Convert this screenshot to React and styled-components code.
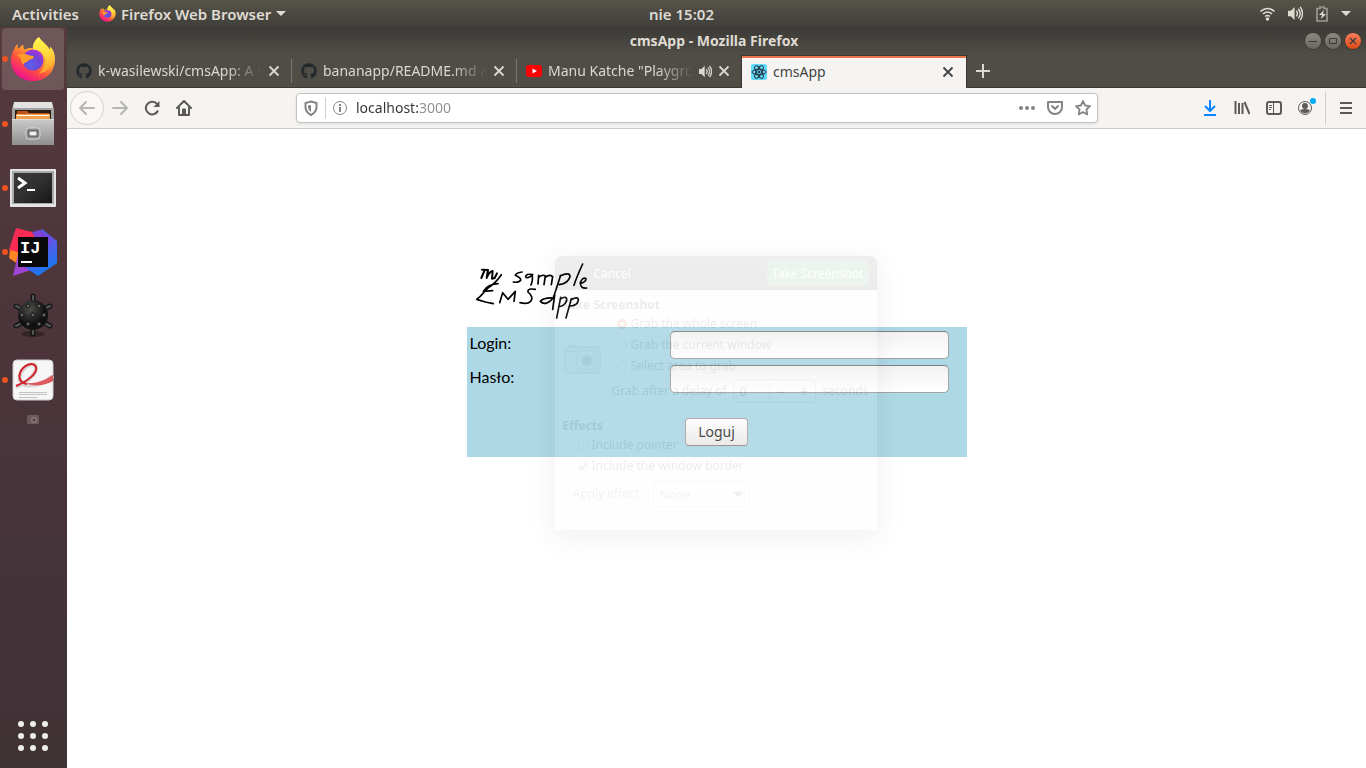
import React from "react";
import styled, { createGlobalStyle, css } from "styled-components";
import { FaGithub } from "react-icons/fa";

const GlobalStyle = createGlobalStyle`
  * { box-sizing: border-box; }
  body { margin: 0; background: #fff; font-family: "Noto Sans", "Open Sans", sans-serif; }
  button, input, select { font-family: inherit; margin: 0; }
  button { padding: 0; border: 0; background: none; }
  svg { display: block; flex: none; }
`;

const Desktop = styled.div`
  min-height: 100vh;
  display: flex;
  flex-direction: column;
`;

/* ---- system bar ---- */
const SystemBar = styled.header`
  height: 27px;
  display: grid;
  grid-template-columns: 1fr auto 1fr;
  align-items: center;
  padding: 0 15px 0 12px;
  background: linear-gradient(#57534a, #403f3a);
  color: #dfdbd2;
  font-size: 15px;
  line-height: 20px;
  font-weight: 600;
`;
const BarGroup = styled.div`
  display: flex;
  align-items: center;
  justify-content: ${(p) => (p.$end ? "flex-end" : "flex-start")};
  gap: ${(p) => (p.$end ? 13 : 20)}px;
`;
const BarButton = styled.button`
  display: flex;
  align-items: center;
  gap: 5px;
  color: inherit;
  font-size: 15px;
  font-weight: 600;
  line-height: 20px;
  white-space: nowrap;
`;

const Body = styled.div`
  flex: 1;
  display: flex;
`;

/* ---- dock ---- */
const Dock = styled.nav`
  width: 67px;
  flex: none;
  display: flex;
  flex-direction: column;
  align-items: stretch;
  background: linear-gradient(#553a3e, #4b343a 45%, #44343a 75%, #3f3234);
`;
const DockItem = styled.button`
  height: 64px;
  display: grid;
  grid-template-columns: 9px 44px;
  align-items: center;
  border-radius: 4px;
  margin: 0 3px 0 2px;
  svg { justify-self: center; }
  ${(p) => p.$active && css`background: #6e5659; height: 62px; margin: 1px 3px 2px 2px;`}
`;
const RunDot = styled.span`
  width: 6px;
  height: 6px;
  border-radius: 50%;
  background: ${(p) => (p.$on ? "#e95420" : "transparent")};
`;
const DockMini = styled.button`
  display: flex;
  justify-content: center;
  padding: 3px 2px 0 0;
`;
const AppsButton = styled.button`
  margin-top: auto;
  display: flex;
  justify-content: center;
  padding: 0 2px 16px 0;
`;

/* ---- browser ---- */
const Browser = styled.main`
  flex: 1;
  min-width: 0;
  display: flex;
  flex-direction: column;
`;
const TitleBar = styled.div`
  height: 28px;
  display: grid;
  grid-template-columns: 1fr auto 1fr;
  align-items: center;
  padding-right: 5px;
  background: linear-gradient(#3b3a36, #504d46);
  color: #dfdbd2;
  font-size: 14px;
  line-height: 20px;
  font-weight: 700;
`;
const WindowButtons = styled.div`
  display: flex;
  justify-content: flex-end;
  gap: 4px;
`;
const WindowButton = styled.button`
  width: 16px;
  height: 16px;
  border-radius: 50%;
  display: grid;
  place-items: center;
  color: #3c3b37;
  background: ${(p) => (p.$close ? "linear-gradient(#f37f5d, #dd4814)" : "linear-gradient(#8b8982, #686660)")};
  box-shadow: 0 0 0 1px #3c3b37;
`;
const TabStrip = styled.div`
  height: 33px;
  display: flex;
  background: #504d46;
  border-bottom: 1px solid #3a3935;
`;
const Tab = styled.div`
  width: 225px;
  min-width: 0;
  display: flex;
  align-items: center;
  gap: 6px;
  padding: 0 12px 0 9px;
  color: #dcd8d0;
  background: linear-gradient(#7b776e, #7b776e) right 0 center / 1px 24px no-repeat;
  ${(p) => p.$last && css`background: none;`}
  ${(p) => p.$active && css`
    background: #f5f4f2;
    color: #444;
    height: 33px;
    border: solid #3a3935;
    border-width: 1px 1px 0;
    box-shadow: inset 0 2px #ed764d;
    width: 226px;
    margin-left: -1px;
  `}
`;
const TabTitle = styled.button`
  flex: 1;
  min-width: 0;
  overflow: hidden;
  text-align: left;
  white-space: nowrap;
  color: inherit;
  font-size: 14px;
  line-height: 20px;
  ${(p) => p.$fade && css`mask-image: linear-gradient(to right, #000 calc(100% - 36px), transparent);`}
`;
const IconButton = styled.button`
  display: grid;
  place-items: center;
  color: inherit;
`;
const NewTab = styled(IconButton)`
  width: 32px;
  color: #dcd8d0;
`;
const Toolbar = styled.div`
  height: 41px;
  display: flex;
  align-items: center;
  background: #f5f4f2;
  border-bottom: 1px solid #cbc8c5;
  color: #5c5b58;
  padding-left: 3px;
`;
const NavButton = styled(IconButton)`
  width: ${(p) => (p.$wide ? 40 : 32)}px;
  height: 32px;
  ${(p) => p.$dim && css`color: #b8b6b3;`}
  ${(p) => p.$round && css`
    width: 34px;
    height: 34px;
    border-radius: 50%;
    border: 1px solid #d4d2cf;
    background: #f9f8f7;
  `}
`;
const UrlBox = styled.div`
  flex: 1;
  height: 30px;
  margin: 0 96px;
  padding: 0 6px;
  display: flex;
  align-items: center;
  gap: 12px;
  background: #fff;
  border: 1px solid #c6c3c0;
  border-radius: 4px;
  box-shadow: 0 1px 3px #0000001a;
  color: #858482;
`;
const Rule = styled.span`
  width: 1px;
  height: ${(p) => p.$h}px;
  background: #cfccc9;
`;
const SiteInfo = styled.div`
  display: flex;
  align-items: center;
  gap: 6px;
`;
const UrlInput = styled.input`
  flex: 1;
  min-width: 0;
  padding: 0;
  margin-left: -4px;
  border: 0;
  outline: 0;
  font-size: 14px;
  line-height: 20px;
  color: #333;
  background: linear-gradient(to right, #333 62px, #8f8f8f 62px);
  background-clip: text;
  -webkit-text-fill-color: transparent;
`;
const MenuArea = styled.div`
  display: flex;
  align-items: center;
  ${Rule} { margin-left: 3px; }
`;

/* ---- page ---- */
const Page = styled.section`
  flex: 1;
  position: relative;
  padding: 131px 16px 16px;
  background: #fff;
`;
const Content = styled.div`
  max-width: 500px;
  margin: 0 auto;
  font-family: Lato, sans-serif;
`;
const Logo = styled.svg`
  margin: 0 0 5px 6px;
`;
const LoginForm = styled.form`
  height: 130px;
  padding: 4px 18px 0 3px;
  background: #add8e6;
  color: #000;
`;
const Field = styled.div`
  display: grid;
  grid-template-columns: 200px 1fr;
  align-items: center;
  margin-bottom: 6px;
  font-size: 16px;
`;
const FieldLabel = styled.label`
  line-height: 20px;
  padding-bottom: 4px;
`;
const TextInput = styled.input`
  width: 100%;
  height: 28px;
  padding: 0 6px;
  border: 1px solid #a5a19e;
  border-top-color: #85817e;
  border-radius: 5px;
  outline: 0;
  background: linear-gradient(#f2f2f2, #fff);
`;
const FormActions = styled.div`
  display: flex;
  justify-content: center;
  padding: 19px 0 0 15px;
`;
const SubmitButton = styled.button`
  position: relative;
  z-index: 2;
  width: 63px;
  height: 28px;
  padding-bottom: 2px;
  border: 1px solid #b4aeaa;
  border-bottom-color: #9d9793;
  border-radius: 4px;
  background: linear-gradient(#fdfdfd, #ebeae9);
  color: #4c4c4c;
  font-family: "Noto Sans", sans-serif;
  font-size: 14px;
`;

/* ---- fading screenshot dialog ---- */
const Dialog = styled.aside`
  position: absolute;
  z-index: 1;
  top: 127px;
  left: 50%;
  width: 322px;
  height: 274px;
  margin-left: -162px;
  border-radius: 6px 6px 0 0;
  background: #fafafa;
  box-shadow: 0 6px 28px 4px #00000090;
  opacity: 0.09;
  pointer-events: none;
  color: #333;
  font-size: 12px;
  line-height: 16px;
`;
const DialogHeader = styled.div`
  height: 34px;
  display: flex;
  align-items: center;
  justify-content: space-between;
  padding: 0 8px 0 35px;
  border-radius: 6px 6px 0 0;
  background: linear-gradient(#4d4b46, #33322e);
`;
const DialogButton = styled.button`
  height: 26px;
  padding: 0 4px;
  border-radius: 4px;
  color: #fff;
  font-size: 12px;
  ${(p) => p.$primary && css`background: #3a8c50; border: 1px solid #667;`}
`;
const DialogBody = styled.div`
  padding: 7px 8px;
`;
const GroupTitle = styled.h2`
  margin: 0;
  font-size: 12px;
  line-height: 16px;
  font-weight: 700;
`;
const GrabRow = styled.div`
  display: flex;
  align-items: flex-end;
  gap: 16px;
  padding-left: 1px;
`;
const Choices = styled.div`
  display: flex;
  flex-direction: column;
`;
const Choice = styled.label`
  display: flex;
  align-items: center;
  gap: 4px;
  height: 21px;
  white-space: nowrap;
`;
const Mark = styled.input`
  appearance: none;
  width: 10px;
  height: 10px;
  border: 1px solid #bbb;
  border-radius: ${(p) => (p.type === "radio" ? "50%" : "2px")};
  &:checked { border: ${(p) => (p.type === "radio" ? "3px solid #e0401c" : "1px solid #bbb")}; }
`;
const TickBox = styled.span`
  display: grid;
  ${Mark}, svg { grid-area: 1 / 1; }
`;
const DelayRow = styled.div`
  display: flex;
  align-items: center;
  gap: 6px;
  padding-left: 49px;
  height: 24px;
  margin: 3px 0 15px;
  white-space: nowrap;
`;
const Spinner = styled.div`
  width: 87px;
  height: 24px;
  display: grid;
  grid-template-columns: 36px 1fr 1fr;
  align-items: center;
  border: 1px solid #aaa;
  border-radius: 4px;
  button { font-size: 14px; color: #222; }
`;
const SpinValue = styled.input`
  width: 100%;
  border: 0;
  border-right: 1px solid #ccc;
  padding: 0 6px;
  background: none;
  font-size: 12px;
`;
const EffectChoices = styled.div`
  padding-left: 15px;
`;
const EffectRow = styled.div`
  display: flex;
  align-items: center;
  gap: 11px;
  margin: 5px 0 0 10px;
  color: #777;
`;
const EffectSelect = styled.select`
  appearance: none;
  width: 97px;
  height: 26px;
  padding: 0 5px;
  border: 1px solid #bbb;
  border-radius: 4px;
  color: #777;
  font-size: 12px;
  background: conic-gradient(from -45deg at 50% 100%, #666 90deg, transparent 0) right 6px center / 10px 5px no-repeat;
`;

/* ---- icons ---- */
function Firefox({ size, id }) {
  return (
    <svg width={size} height={size} viewBox="0 0 48 48">
      <defs>
        <linearGradient id={id + "a"} x1=".85" y1=".1" x2=".3" y2=".95">
          <stop offset="0" stopColor="#fff44f" /><stop offset=".4" stopColor="#ffa02f" />
          <stop offset=".7" stopColor="#ff4f40" /><stop offset="1" stopColor="#f0148c" />
        </linearGradient>
        <radialGradient id={id + "b"} cx=".4" cy=".75" r=".75">
          <stop offset="0" stopColor="#5b62ea" /><stop offset=".6" stopColor="#7142d8" /><stop offset="1" stopColor="#a933dc" />
        </radialGradient>
        <linearGradient id={id + "c"} x1=".4" y1="0" x2=".6" y2="1">
          <stop offset="0" stopColor="#fff44f" /><stop offset=".5" stopColor="#ffd83c" /><stop offset="1" stopColor="#ff9a2a" />
        </linearGradient>
      </defs>
      <path fill={`url(#${id}a)`} d="M30 1c-4 3-6 7-6 12-3-1-6 0-8 1-2-1-2-3-2-5-3 1-4 3-5 4-1-1-1-3-1-5-4 4-6 11-7 15C0 37 10 47 24 47s23-10 23-23c0-5-2-10-5-13l0 4C39 9 34 7 30 1z" />
      <circle cx="24" cy="25" r="11" fill={`url(#${id}b)`} />
      <path fill={`url(#${id}c)`} d="M30 1c-4 4-7 8-6 13 5 0 10 2 12 8 2 7-1 13-6 17 10-1 16-8 16-17 0-4-2-8-4-11v4C39 9 34 7 30 1z" />
      <path fill="#ff9d2c" d="M7 20c5-2 9-1 13 0 2 1 5 0 5 2-1 3-5 2-6 4-3 2-5 2-5 4-2-2-3-5-3-7-1-2-3-2-4-3z" />
    </svg>
  );
}

const FilesIcon = () => (
  <svg width="44" height="46" viewBox="0 0 44 46">
    <defs><linearGradient id="fc" x2="0" y2="1"><stop stopColor="#c9c9c9" /><stop offset="1" stopColor="#8f8f8f" /></linearGradient></defs>
    <path d="M3 2h38l2 6v34H1V8z" fill="#a2a2a2" />
    <path d="M3 1h38l1 6H2z" fill="#e2e2e2" />
    <path d="M4 9h36v11H4z" fill="#2b1c14" />
    <path d="M6 10h10l2 2h20v8H6z" fill="#c2521c" /><path d="M5 13h34v7H5z" fill="#f2a04a" /><path d="M6 14h32v1H6z" fill="#fff" />
    <path d="M1 19h42v25H1z" fill="url(#fc)" /><path d="M1 18h42v1H1z" fill="#dcdcdc" />
    <rect x="15" y="27" width="14" height="11" rx="3" fill="#8b8b8b" stroke="#d8d8d8" />
    <rect x="18" y="30" width="8" height="5" fill="#f2f2f2" stroke="#555" />
  </svg>
);
const TerminalIcon = () => (
  <svg width="46" height="38" viewBox="0 0 46 38">
    <defs><linearGradient id="tm" x2="1" y2="1"><stop stopColor="#3a3a3a" /><stop offset=".5" stopColor="#303030" /><stop offset="1" stopColor="#151515" /></linearGradient></defs>
    <rect width="46" height="38" rx="1" fill="#e4e4e4" /><rect x="2" y="2" width="42" height="33" fill="#a9a9a9" />
    <rect x="4" y="4" width="38" height="30" fill="url(#tm)" />
    <path d="M8 9l7 5-7 5" fill="none" stroke="#fff" strokeWidth="3" /><path d="M17 21h8" stroke="#fff" strokeWidth="2" />
  </svg>
);
const IdeaLabel = styled.text`
  font: 700 17px "Liberation Mono", monospace;
  fill: #fff;
`;
const IdeaIcon = () => (
  <svg width="50" height="48" viewBox="0 0 50 48">
    <defs>
      <linearGradient id="ij2" x2=".4" y2="1"><stop stopColor="#3d6af0" /><stop offset=".45" stopColor="#6552e8" /><stop offset="1" stopColor="#1879f0" /></linearGradient>
    </defs>
    <path d="M8 0l16 4 8 14L9 26 1 22z" fill="#fb2b54" /><path d="M2 22l14 4-6 10-9-6z" fill="#ff8522" />
    <path d="M10 26L5 48l24-8z" fill="#a044d4" /><path d="M34 1l15 12v22L30 48 18 40l8-30z" fill="url(#ij2)" />
    <path d="M24 4l8-2 10 8-4 18z" fill="#7b43d9" />
    <rect x="10" y="9" width="30" height="30" fill="#090909" />
    <IdeaLabel x="12" y="25">IJ</IdeaLabel>
    <path d="M13 34h11" stroke="#fff" strokeWidth="2" />
  </svg>
);
const MineIcon = () => (
  <svg width="42" height="46" viewBox="0 0 42 46">
    <defs><radialGradient id="mn" cx=".4" cy=".3"><stop stopColor="#4e504c" /><stop offset="1" stopColor="#111" /></radialGradient></defs>
    <ellipse cx="21" cy="41" rx="12" ry="3" fill="#332426" />
    <g stroke="#151717" strokeWidth="5" strokeLinecap="round"><path d="M21 3v38M4 13l34 20M38 13L4 33" /></g>
    <g stroke="#555854" strokeWidth="2" strokeLinecap="round"><path d="M21 3v5M21 37v4M4 13l4 2M38 33l-4-2M38 13l-4 2M4 33l4-2" /></g>
    <circle cx="21" cy="22" r="15" fill="url(#mn)" />
    <g fill="#62655f" stroke="#151515"><circle cx="16" cy="13" r="2" /><circle cx="27" cy="13" r="2" /><circle cx="10" cy="22" r="2" /><circle cx="21" cy="22" r="2" /><circle cx="32" cy="22" r="2" /><circle cx="16" cy="31" r="2" /><circle cx="27" cy="31" r="2" /></g>
  </svg>
);
const ReaderIcon = () => (
  <svg width="42" height="42" viewBox="0 0 42 42">
    <rect x="1" y="1" width="40" height="40" rx="4" fill="#f6f6f6" stroke="#ccc" />
    <path d="M4 28C16 23 25 14 24 8c-1-5-9-3-14 4-4 6-3 12 3 14 8 2 19-2 28-9" fill="none" stroke="#d6d6d6" strokeWidth="4" />
    <path d="M4 27C16 22 26 14 24 8c-3-6-13-2-16 6-2 6 1 10 7 11" fill="none" stroke="#d32129" strokeWidth="2" />
    <path d="M13 24c10 1 19-2 28-8v6c-9 5-19 6-28 2z" fill="#df5a5e" />
    <path d="M7 33.500h28M7 35.500h28M7 38.500h18" stroke="#c3c3c3" />
  </svg>
);
const Arrow = ({ back }) => (
  <svg width="18" height="16" viewBox="0 0 18 16" fill="none" stroke="currentColor" strokeWidth="2" strokeLinecap="round" strokeLinejoin="round">
    {back ? <path d="M16 8H2M8 2L2 8l6 6" /> : <path d="M2 8h14M10 2l6 6-6 6" />}
  </svg>
);
const Cross = () => (
  <svg width="12" height="12" viewBox="0 0 12 12" stroke="currentColor" strokeWidth="1.800"><path d="M1.500 1.500l9 9M10.500 1.500l-9 9" /></svg>
);
const Caret = () => <svg width="10" height="6" viewBox="0 0 10 6"><path d="M0 0h10L5 5z" fill="currentColor" /></svg>;
const Speaker = ({ size }) => (
  <svg width={size} height={size} viewBox="0 0 16 16" fill="none" stroke="currentColor" strokeWidth="1.500">
    <path d="M0 5h3l4-4v14l-4-4H0z" fill="currentColor" stroke="none" /><path d="M9 5q2 3 0 6M11 3q4 5 0 10M13 1q5 7 0 14" />
  </svg>
);
const ReactIcon = () => (
  <svg width="16" height="16" viewBox="0 0 16 16" fill="none" stroke="#20303a">
    <rect width="16" height="16" rx="2" fill="#61dafb" stroke="none" />
    <ellipse cx="8" cy="8" rx="7" ry="2.700" /><ellipse cx="8" cy="8" rx="7" ry="2.700" transform="rotate(60 8 8)" /><ellipse cx="8" cy="8" rx="7" ry="2.700" transform="rotate(120 8 8)" />
    <circle cx="8" cy="8" r="1.300" fill="#20303a" stroke="none" />
  </svg>
);
const YoutubeIcon = () => (
  <svg width="16" height="16" viewBox="0 0 16 16"><rect x="0" y="2" width="16" height="12" rx="3" fill="#f00" /><path d="M6.500 5.500v5L11 8z" fill="#fff" /></svg>
);

const dockItems = [
  { name: "Firefox", icon: <Firefox size={46} id="fd" />, on: true, active: true },
  { name: "Files", icon: <FilesIcon />, on: true },
  { name: "Terminal", icon: <TerminalIcon />, on: true },
  { name: "IntelliJ IDEA", icon: <IdeaIcon />, on: true },
  { name: "Mines", icon: <MineIcon /> },
  { name: "Document Viewer", icon: <ReaderIcon />, on: true },
];

const tabs = [
  { title: "k-wasilewski/cmsApp: A s", icon: <FaGithub size={16} color="#24292e" />, fade: true },
  { title: "bananapp/README.md a", icon: <FaGithub size={16} color="#24292e" />, fade: true },
  { title: "Manu Katche \"Playgro", icon: <YoutubeIcon />, fade: true, sound: true, last: true },
  { title: "cmsApp", icon: <ReactIcon />, active: true },
];

function SystemTop() {
  return (
    <SystemBar>
      <BarGroup>
        <BarButton>Activities</BarButton>
        <BarButton><Firefox size={17} id="ft" />Firefox Web Browser<Caret /></BarButton>
      </BarGroup>
      <span>nie 15:02</span>
      <BarGroup $end>
        <svg width="15" height="14" viewBox="0 0 15 14" fill="none" stroke="currentColor" strokeWidth="1.600">
          <path d="M0.500 4.500q7-6 14 0M3 7q4.500-4 9 0M5 9.500q2.500-2 5 0" /><circle cx="7.500" cy="12" r="1.800" fill="currentColor" stroke="none" />
        </svg>
        <Speaker size={15} />
        <svg width="12" height="16" viewBox="0 0 12 16"><path d="M1 2.500h3V1h4v1.500h3V15H1z" fill="none" stroke="#9c9992" strokeWidth="1.700" /><path d="M8 4L3 9h3l-1 4 5-5H7z" fill="currentColor" /></svg>
        <Caret />
      </BarGroup>
    </SystemBar>
  );
}

function BrowserToolbar() {
  return (
    <Toolbar>
      <NavButton $round $dim aria-label="Back"><Arrow back /></NavButton>
      <NavButton $dim aria-label="Forward"><Arrow /></NavButton>
      <NavButton aria-label="Reload">
        <svg width="16" height="16" viewBox="0 0 16 16" fill="none" stroke="currentColor" strokeWidth="2"><path d="M14 10.500A6.300 6.300 0 1 1 12.500 3.500L14 5" /><path d="M15.500 1v6h-6z" fill="currentColor" stroke="none" /></svg>
      </NavButton>
      <NavButton aria-label="Home">
        <svg width="16" height="16" viewBox="0 0 16 16" fill="none" stroke="currentColor" strokeWidth="2" strokeLinejoin="round" strokeLinecap="round"><path d="M1 8l7-7 7 7M3 7v8h10V7" /><path d="M7 14V9.500h2V14" /></svg>
      </NavButton>
      <UrlBox>
        <SiteInfo>
          <svg width="16" height="16" viewBox="0 0 16 16"><path d="M8 1.500l5.500 1.500v4q0 5-5.500 8-5.500-3-5.500-8V3z" fill="none" stroke="currentColor" strokeWidth="2" /><path d="M8 5v7q-3-2-3-5V5.500z" fill="currentColor" /></svg>
          <Rule $h={22} />
          <svg width="16" height="16" viewBox="0 0 16 16" fill="none" stroke="currentColor"><circle cx="8" cy="8" r="6.500" /><path d="M8 7v5M8 4v2" strokeWidth="2" /></svg>
        </SiteInfo>
        <UrlInput aria-label="Address" defaultValue="localhost:3000" />
        <svg width="16" height="16" viewBox="0 0 16 16" fill="currentColor"><circle cx="2" cy="8" r="2" /><circle cx="8" cy="8" r="2" /><circle cx="14" cy="8" r="2" /></svg>
        <svg width="16" height="16" viewBox="0 0 16 16" fill="none" stroke="currentColor" strokeWidth="2" strokeLinejoin="round" strokeLinecap="round"><path d="M1 2h14v5a7 7 0 0 1-14 0z" /><path d="M5 6l3 3 3-3" /></svg>
        <svg width="16" height="16" viewBox="0 0 16 16" fill="none" stroke="currentColor" strokeWidth="1.800" strokeLinejoin="round"><path d="M8 1l2.100 4.500 4.900.600-3.600 3.400.9 4.900L8 12l-4.300 2.400.9-4.900L1 6.100l4.900-.6z" /></svg>
      </UrlBox>
      <MenuArea>
        <NavButton aria-label="Downloads"><svg width="14" height="16" viewBox="0 0 14 16" fill="none" stroke="#0a84ff" strokeWidth="2" strokeLinejoin="round"><path d="M7 0v11M2 6l5 5 5-5M1 15h12" /></svg></NavButton>
        <NavButton aria-label="Library"><svg width="16" height="16" viewBox="0 0 16 16" stroke="currentColor" strokeWidth="2"><path d="M1.500 1v13M5 3v11M8.500 3v11M10.500 2l5 12" /></svg></NavButton>
        <NavButton aria-label="Sidebars"><svg width="16" height="16" viewBox="0 0 16 16" fill="none" stroke="currentColor"><rect x="1" y="2" width="14" height="12" rx="2" strokeWidth="2" /><path d="M7.500 2v12M3 5.500h3M3 7.500h3M3 9.500h2" /></svg></NavButton>
        <NavButton aria-label="Account">
          <svg width="20" height="20" viewBox="0 0 20 20"><circle cx="9" cy="10" r="6.500" fill="none" stroke="currentColor" /><circle cx="9" cy="8" r="3" fill="currentColor" /><path d="M4 12q5-2 10 0-1 3-5 3.500Q5 15 4 12z" fill="currentColor" /><circle cx="17" cy="3" r="3" fill="#00adf5" /></svg>
        </NavButton>
        <Rule $h={33} />
        <NavButton $wide aria-label="Menu"><svg width="12" height="14" viewBox="0 0 12 14" stroke="currentColor" strokeWidth="2"><path d="M0 2h12M0 7h12M0 12h12" /></svg></NavButton>
      </MenuArea>
    </Toolbar>
  );
}

function ScreenshotDialog() {
  return (
    <Dialog>
      <DialogHeader>
        <DialogButton type="button">Cancel</DialogButton>
        <DialogButton type="button" $primary>Take Screenshot</DialogButton>
      </DialogHeader>
      <DialogBody>
        <GroupTitle>Take Screenshot</GroupTitle>
        <GrabRow>
          <svg width="37" height="32" viewBox="0 0 37 32"><rect x="1" y="3" width="35" height="26" rx="2" fill="#ddd" stroke="#888" /><path d="M4 1h7v3H4z" fill="#999" /><path d="M2 7h33" stroke="#999" /><circle cx="22" cy="16" r="10" fill="#eee" stroke="#999" /><circle cx="23" cy="17" r="6" fill="#999" /><circle cx="23" cy="17" r="4" fill="#666" /></svg>
          <Choices>
            <Choice><Mark type="radio" name="area" defaultChecked />Grab the whole screen</Choice>
            <Choice><Mark type="radio" name="area" />Grab the current window</Choice>
            <Choice><Mark type="radio" name="area" />Select area to grab</Choice>
          </Choices>
        </GrabRow>
        <DelayRow>
          <label htmlFor="delay">Grab after a delay of</label>
          <Spinner><SpinValue id="delay" defaultValue="0" /><button type="button">−</button><button type="button">+</button></Spinner>
          <span>seconds</span>
        </DelayRow>
        <GroupTitle>Effects</GroupTitle>
        <EffectChoices>
          <Choice><Mark type="checkbox" />Include pointer</Choice>
          <Choice>
            <TickBox>
              <Mark type="checkbox" defaultChecked />
              <svg width="10" height="10" viewBox="0 0 10 10" fill="none" stroke="#555" strokeWidth="2"><path d="M2 5l2 3 5-6" /></svg>
            </TickBox>
            Include the window border
          </Choice>
        </EffectChoices>
        <EffectRow>
          <label htmlFor="effect">Apply effect:</label>
          <EffectSelect id="effect"><option>None</option></EffectSelect>
        </EffectRow>
      </DialogBody>
    </Dialog>
  );
}

function HandwrittenLogo() {
  return (
    <Logo width="117" height="62" viewBox="39 30 351 186" fill="none" stroke="#000" strokeWidth="5" strokeLinecap="round" strokeLinejoin="round" role="img" aria-label="my sample CMS app">
      <path strokeWidth="6" d="M64 84L74 60M66 59L84 60 80 84Q86 66 98 63L96 86 104 84 111 70" />
      <path d="M124 74Q108 98 84 114L60 140 50 148 76 156 100 161M114 101Q84 102 70 124L98 122" />
      <path d="M186 66Q166 70 166 76 184 84 182 91 174 99 160 96" />
      <path d="M218 74Q198 70 197 80 200 88 216 76 220 86 213 105M236 76L234 102M236 82Q248 72 256 78L252 104M256 82Q268 72 278 80L274 104" />
      <path d="M302 76L280 144M300 78Q330 64 330 80 324 100 298 104M368 42Q350 80 342 106M362 100Q378 96 378 86 368 80 361 98 360 116 380 114" />
      <path d="M119 158L128 128 144 148 166 124 162 154M226 118Q202 114 204 126 222 142 212 154 202 164 180 158" />
      <path d="M280 144Q252 142 241 154 250 164 262 158 276 152 284 136L278 178M302 142L290 204M300 148Q322 134 320 152 312 170 296 170M334 146L318 204M332 150Q356 136 355 152 350 168 328 168" />
    </Logo>
  );
}

export default function App() {
  return (
    <Desktop>
      <GlobalStyle />
      <SystemTop />
      <Body>
        <Dock>
          {dockItems.map((d) => (
            <DockItem key={d.name} $active={d.active} aria-label={d.name}><RunDot $on={d.on} />{d.icon}</DockItem>
          ))}
          <DockMini aria-label="Screenshot">
            <svg width="12" height="9" viewBox="0 0 12 9"><rect width="12" height="9" rx="1" fill="#6b595d" /><circle cx="7" cy="5" r="3" fill="#8b7b7d" /><circle cx="7" cy="5" r="1.500" fill="#4c3d40" /></svg>
          </DockMini>
          <AppsButton aria-label="Show Applications">
            <svg width="32" height="32" viewBox="0 0 32 32" fill="#eeeeec">
              {[4, 16, 28].map((y) => [4, 16, 28].map((x) => <circle key={x + "-" + y} cx={x} cy={y} r="3" />))}
            </svg>
          </AppsButton>
        </Dock>
        <Browser>
          <TitleBar>
            <span />
            <span>cmsApp - Mozilla Firefox</span>
            <WindowButtons>
              <WindowButton aria-label="Minimize"><svg width="8" height="8"><path d="M0 4.500h8" stroke="currentColor" /></svg></WindowButton>
              <WindowButton aria-label="Maximize"><svg width="8" height="8"><path d="M.5 1.500h7v5h-7z" fill="none" stroke="currentColor" /></svg></WindowButton>
              <WindowButton $close aria-label="Close"><svg width="8" height="8"><path d="M1 1l6 6M7 1L1 7" stroke="currentColor" strokeWidth="1.300" /></svg></WindowButton>
            </WindowButtons>
          </TitleBar>
          <TabStrip>
            {tabs.map((t) => (
              <Tab key={t.title} $active={t.active} $last={t.last}>
                {t.icon}
                <TabTitle $fade={t.fade}>{t.title}</TabTitle>
                {t.sound && <IconButton aria-label="Mute tab"><Speaker size={13} /></IconButton>}
                <IconButton aria-label="Close tab"><Cross /></IconButton>
              </Tab>
            ))}
            <NewTab aria-label="New tab"><svg width="14" height="14" viewBox="0 0 14 14" stroke="currentColor" strokeWidth="2"><path d="M7 0v14M0 7h14" /></svg></NewTab>
          </TabStrip>
          <BrowserToolbar />
          <Page>
            <Content>
              <HandwrittenLogo />
              <LoginForm onSubmit={(e) => e.preventDefault()}>
                <Field><FieldLabel htmlFor="login">Login:</FieldLabel><TextInput id="login" /></Field>
                <Field><FieldLabel htmlFor="haslo">Hasło:</FieldLabel><TextInput id="haslo" type="password" /></Field>
                <FormActions><SubmitButton>Loguj</SubmitButton></FormActions>
              </LoginForm>
            </Content>
            <ScreenshotDialog />
          </Page>
        </Browser>
      </Body>
    </Desktop>
  );
}
